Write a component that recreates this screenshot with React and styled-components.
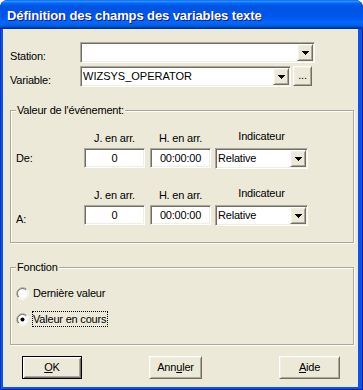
import React from 'react';
import styled, { createGlobalStyle, css } from 'styled-components';

const GlobalStyle = createGlobalStyle`
  html, body { margin: 0; padding: 0; background: #ffffff; }
  body {
    font-family: "Liberation Sans", Arial, sans-serif;
    font-size: 11px;
    color: #000;
    letter-spacing: -0.2px;
  }
`;

const FACE = '#ECE9D8';

const sunken = css`
  box-sizing: border-box;
  border: 1px solid;
  border-color: #ACA899 #FFFFFF #FFFFFF #ACA899;
  box-shadow: inset 1px 1px 0 #716F64, inset -1px -1px 0 #F1EFE2;
  background: #ffffff;
`;

const raised = css`
  box-sizing: border-box;
  border: 1px solid;
  border-color: #FFFFFF #716F64 #716F64 #FFFFFF;
  box-shadow: inset 1px 1px 0 #F1EFE2, inset -1px -1px 0 #ACA899;
  background: ${FACE};
`;

const Window = styled.div`
  width: 363px;
  height: 390px;
  display: flex;
  flex-direction: column;
  background: #0A55E9;
  border-radius: 8px 8px 0 0;
  box-shadow: inset 1px 0 0 #0831D9, inset -1px 0 0 #001EA0, inset 0 -1px 0 #001EA0;
  overflow: hidden;
`;

const TitleBar = styled.div`
  flex: none;
  height: 29px;
  box-sizing: border-box;
  padding: 2px 0 0 7px;
  line-height: 27px;
  font-size: 13px;
  font-weight: bold;
  letter-spacing: -0.1px;
  color: #ffffff;
  text-shadow: 1px 1px 0 #0A1883;
  white-space: nowrap;
  background: linear-gradient(
    180deg,
    #0058EE 0%, #3593FF 4%, #288EFF 6%, #127DFF 8%, #036FFC 10%,
    #0262EE 14%, #0057E5 20%, #0054E3 24%, #0055EB 56%, #005BF5 66%,
    #026AFE 76%, #0062EF 86%, #0052D6 92%, #0040AB 94%, #003092 100%
  );
`;

const Client = styled.div`
  flex: 1;
  margin: 0 5px 3px 3px;
  padding: 13px 0 0 7px;
  background: ${FACE};
  display: flex;
  flex-direction: column;
`;

const FormRow = styled.div`
  display: flex;
  align-items: flex-end;
  margin-top: ${p => p.$top || 0}px;
`;

const FieldLabel = styled.div`
  width: 70px;
  flex: none;
  line-height: 13px;
`;

const Combo = styled.div`
  ${sunken};
  width: ${p => p.$w}px;
  height: 21px;
  flex: none;
  padding: 1px;
  display: flex;
  align-items: center;
`;

const ComboValue = styled.div`
  flex: 1;
  padding-left: 1px;
  line-height: 17px;
  white-space: nowrap;
  letter-spacing: ${p => p.$caps ? '0' : '-0.2px'};
`;

const DropButton = styled.div`
  ${raised};
  width: 16px;
  height: 17px;
  flex: none;
  display: flex;
  align-items: center;
  justify-content: center;
  padding-top: 1px;
`;

const MoreButton = styled.div`
  ${raised};
  width: 19px;
  height: 20px;
  margin: 0 0 1px 2px;
  flex: none;
  text-align: center;
  line-height: 16px;
`;

const Group = styled.div`
  box-sizing: border-box;
  width: 344px;
  margin-top: ${p => p.$top}px;
  padding-bottom: ${p => p.$bottom}px;
  border: 1px solid #ACA899;
  box-shadow: inset 1px 1px 0 #ffffff, 1px 1px 0 #ffffff;
`;

const GroupTitle = styled.div`
  width: fit-content;
  margin: -7px 0 0 5px;
  padding: 0 1px;
  line-height: 13px;
  background: ${FACE};
`;

const EventBlock = styled.div`
  display: grid;
  grid-template-columns: 68px 66px 65px 93px;
  grid-template-rows: 13px 21px;
  row-gap: 3px;
  margin-top: ${p => p.$top}px;
  padding-left: 5px;
`;

const ColHead = styled.div`
  grid-row: 1;
  grid-column: ${p => p.$col};
  width: ${p => p.$w}px;
  text-align: center;
  line-height: 13px;
  white-space: nowrap;
  margin-top: ${p => (p.$lift ? -2 : 0)}px;
`;

const RowLabel = styled.div`
  grid-row: 2;
  grid-column: 1;
  align-self: ${p => (p.$low ? 'end' : 'center')};
  line-height: 13px;
  margin-bottom: ${p => (p.$low ? 0 : 1)}px;
`;

const TextBox = styled.div`
  ${sunken};
  grid-row: 2;
  grid-column: ${p => p.$col};
  width: 61px;
  height: 20px;
  display: flex;
  align-items: center;
  justify-content: center;
`;

const GridCombo = styled(Combo)`
  grid-row: 2;
  grid-column: ${p => p.$col};
`;

const RadioRow = styled.div`
  display: flex;
  align-items: center;
  height: 16px;
  padding-left: 5px;
  margin-top: ${p => p.$top}px;
`;

const RadioText = styled.span`
  margin-left: 3px;
  line-height: 14px;
  border: 1px dotted ${p => (p.$focus ? '#000' : 'transparent')};
  padding-right: 1px;
`;

const ButtonRow = styled.div`
  display: flex;
  margin-top: 11px;
  padding-left: 12px;
`;

const Button = styled.div`
  ${raised};
  width: ${p => p.$w}px;
  height: 23px;
  margin-left: ${p => p.$gap || 0}px;
  flex: none;
  text-align: center;
  line-height: 20px;
  ${p => p.$default && css`
    border: 1px solid #000;
    box-shadow: inset 1px 1px 0 #fff, inset -1px -1px 0 #716F64,
      inset 2px 2px 0 #F1EFE2, inset -2px -2px 0 #ACA899;
  `}
`;

const Key = styled.span`
  text-decoration: underline;
`;

function Arrow() {
  return (
    <svg width="7" height="4" viewBox="0 0 7 4" shapeRendering="crispEdges">
      <rect x="0" y="0" width="7" height="1" fill="#000" />
      <rect x="1" y="1" width="5" height="1" fill="#000" />
      <rect x="2" y="2" width="3" height="1" fill="#000" />
      <rect x="3" y="3" width="1" height="1" fill="#000" />
    </svg>
  );
}

function Radio({ checked }) {
  return (
    <svg width="13" height="13" viewBox="0 0 13 13">
      <circle cx="6.5" cy="6.5" r="5" fill="#fff" />
      <path d="M2.26 10.74 A6 6 0 0 1 10.74 2.26" fill="none" stroke="#ACA899" strokeWidth="1" />
      <path d="M10.74 2.26 A6 6 0 0 1 2.26 10.74" fill="none" stroke="#ffffff" strokeWidth="1" />
      <path d="M2.96 10.04 A5 5 0 0 1 10.04 2.96" fill="none" stroke="#716F64" strokeWidth="1" />
      <path d="M10.04 2.96 A5 5 0 0 1 2.96 10.04" fill="none" stroke="#F1EFE2" strokeWidth="1" />
      {checked && <circle cx="6.5" cy="6.5" r="2" fill="#000" />}
    </svg>
  );
}

function EventRow({ label, low, top }) {
  return (
    <EventBlock $top={top}>
      <ColHead $col={2} $w={61}>J. en arr.</ColHead>
      <ColHead $col={3} $w={61}>H. en arr.</ColHead>
      <ColHead $col={4} $w={93} $lift>Indicateur</ColHead>
      <RowLabel $low={low}>{label}</RowLabel>
      <TextBox $col={2}>0</TextBox>
      <TextBox $col={3}>00:00:00</TextBox>
      <GridCombo $col={4} $w={93}>
        <ComboValue>Relative</ComboValue>
        <DropButton><Arrow /></DropButton>
      </GridCombo>
    </EventBlock>
  );
}

export default function App() {
  return (
    <>
      <GlobalStyle />
      <Window>
        <TitleBar>Définition des champs des variables texte</TitleBar>
        <Client>
          <FormRow>
            <FieldLabel>Station:</FieldLabel>
            <Combo $w={235}>
              <ComboValue />
              <DropButton><Arrow /></DropButton>
            </Combo>
          </FormRow>
          <FormRow $top={3}>
            <FieldLabel>Variable:</FieldLabel>
            <Combo $w={211}>
              <ComboValue $caps>WIZSYS_OPERATOR</ComboValue>
              <DropButton><Arrow /></DropButton>
            </Combo>
            <MoreButton>...</MoreButton>
          </FormRow>

          <Group $top={23} $bottom={16}>
            <GroupTitle>Valeur de l'événement:</GroupTitle>
            <EventRow label="De:" top={15} />
            <EventRow label="A:" low top={20} />
          </Group>

          <Group $top={24} $bottom={17}>
            <GroupTitle>Fonction</GroupTitle>
            <RadioRow $top={11}>
              <Radio />
              <RadioText>Dernière valeur</RadioText>
            </RadioRow>
            <RadioRow $top={10}>
              <Radio checked />
              <RadioText $focus>Valeur en cours</RadioText>
            </RadioRow>
          </Group>

          <ButtonRow>
            <Button $w={60} $default><Key>O</Key>K</Button>
            <Button $w={53} $gap={67}>Ann<Key>u</Key>ler</Button>
            <Button $w={61} $gap={77}><Key>A</Key>ide</Button>
          </ButtonRow>
        </Client>
      </Window>
    </>
  );
}
